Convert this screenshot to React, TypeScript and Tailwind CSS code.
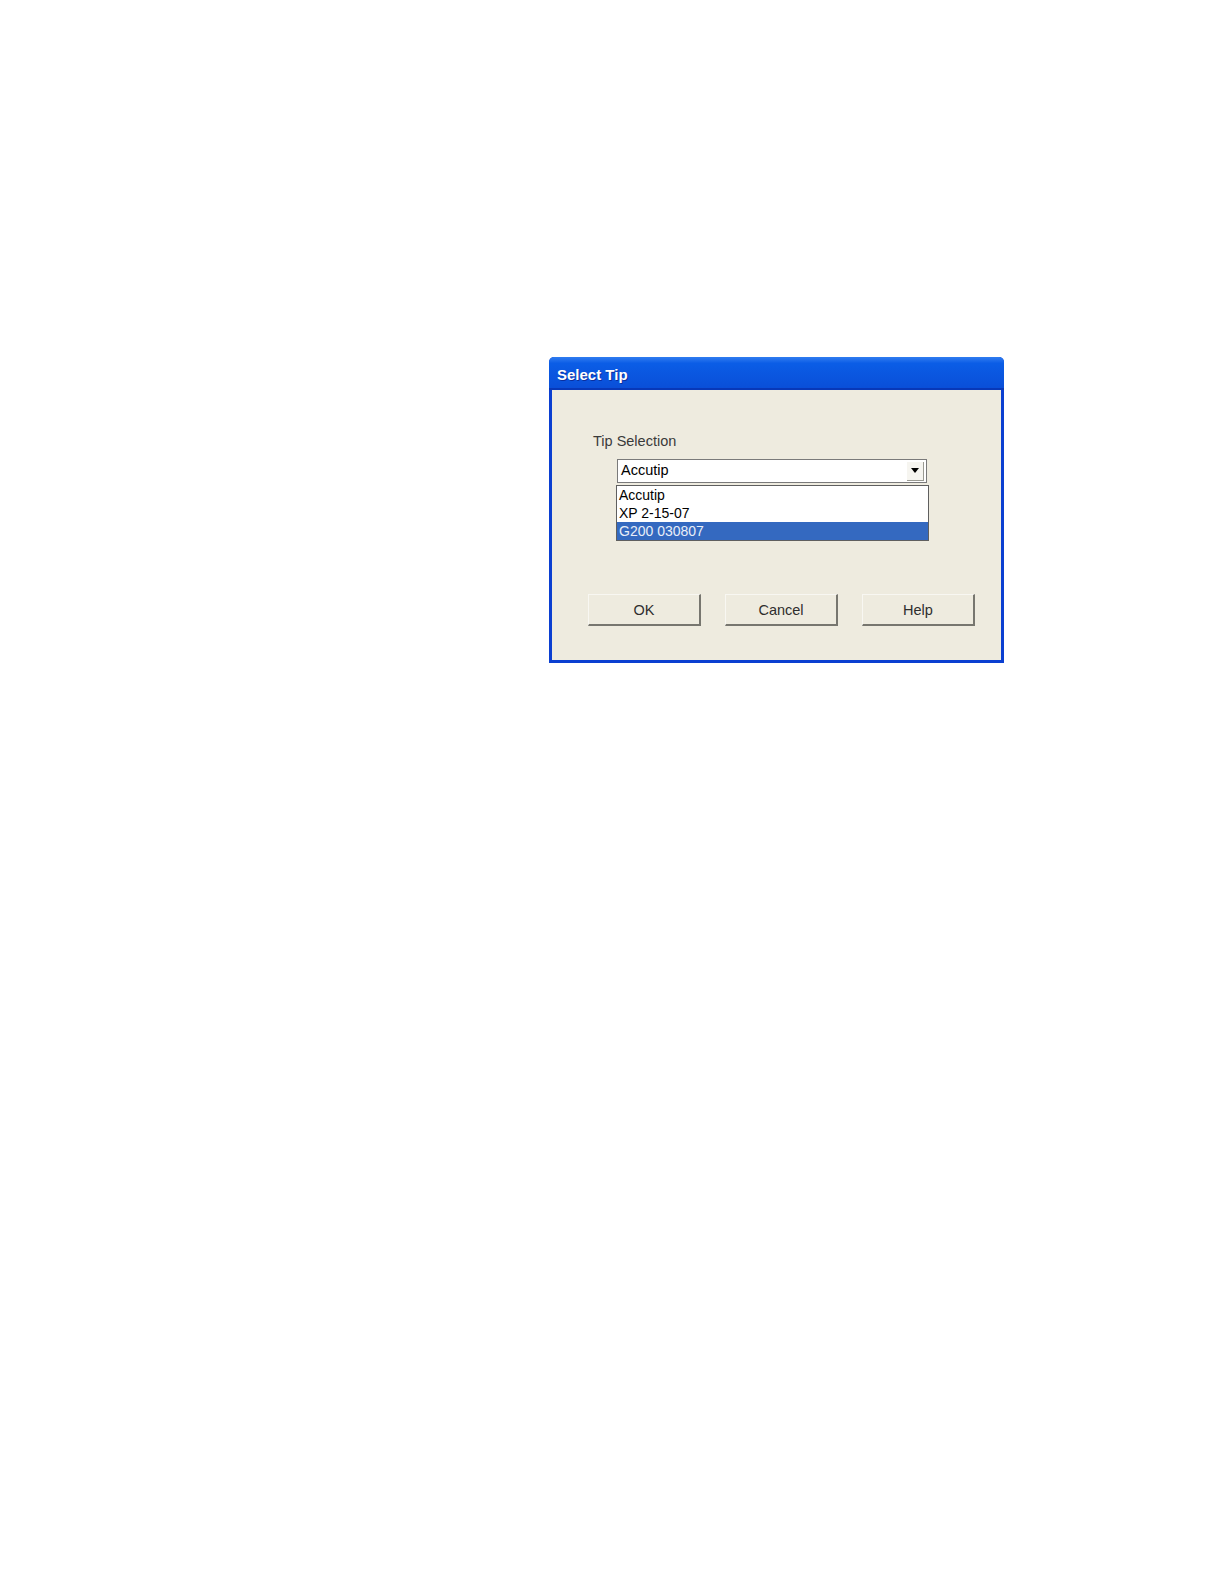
import React from "react";

const tips = ["Accutip", "XP 2-15-07", "G200 030807"];
const buttons = ["OK", "Cancel", "Help"];

const font = { fontFamily: '"Liberation Sans", Arial, sans-serif' };

export default function App() {
  const selected = 2;

  return (
    <div className="w-full min-h-[1584px] bg-white pt-[357px] pl-[549px]" style={font}>
      {/* Dialog window */}
      <div className="flex flex-col w-[455px] h-[306px] rounded-t-[5px] bg-[#0b3fd1] overflow-hidden">
        {/* Title bar */}
        <div className="h-[33px] flex items-center pl-[8px] pt-[5px] bg-gradient-to-b from-[#2f7cf0] via-[#0b5de6] via-20% to-[#0a4fd8] border-b-2 border-[#0838b8]">
          <span className="text-white font-bold text-[15px] [text-shadow:1px_1px_0_#0a2f9e]">
            Select Tip
          </span>
        </div>

        {/* Body */}
        <div className="flex-1 mx-[3px] mb-[3px] bg-[#eeebdf] flex flex-col pt-[43px]">
          <span className="ml-[41px] text-[14.5px] leading-4 text-[#3a3a3a]">
            Tip Selection
          </span>

          <div className="ml-[65px] mt-[10px] w-[313px] flex flex-col">
            {/* Combo box */}
            <div className="h-[24px] w-[310px] bg-white border border-[#7a7a7a] flex items-center">
              <span className="flex-1 pl-[3px] text-[14.5px] text-black">Accutip</span>
              <div className="w-[17px] h-[19px] mr-[2px] flex items-center justify-center bg-[#f6f5f0] border-r border-b border-[#9a9a92]">
                <svg width="8" height="5" viewBox="0 0 8 5">
                  <path d="M0 0h8L4 5z" fill="#000" />
                </svg>
              </div>
            </div>

            {/* Dropdown list */}
            <div className="mt-[2px] -ml-[1px] w-[313px] bg-white border border-[#5f5f5f] flex flex-col">
              {tips.map((t, i) => (
                <div
                  key={t}
                  className={`h-[18px] leading-[18px] pl-[2px] text-[14px] ${
                    i === selected ? "bg-[#3469c0] text-[#e8eef8]" : "text-black"
                  }`}
                >
                  {t}
                </div>
              ))}
            </div>
          </div>

          {/* Buttons */}
          <div className="ml-[36px] mt-[53px] flex gap-[24px]">
            {buttons.map((b) => (
              <button
                key={b}
                className="w-[113px] h-[32px] flex items-center justify-center pt-[2px] bg-[#eeebdf] border-t border-l border-t-[#f8f7f2] border-l-[#f8f7f2] border-r-2 border-b-2 border-r-[#77766f] border-b-[#77766f] text-[14.5px] text-[#2e2e2e]"
              >
                {b}
              </button>
            ))}
          </div>
        </div>
      </div>
    </div>
  );
}
